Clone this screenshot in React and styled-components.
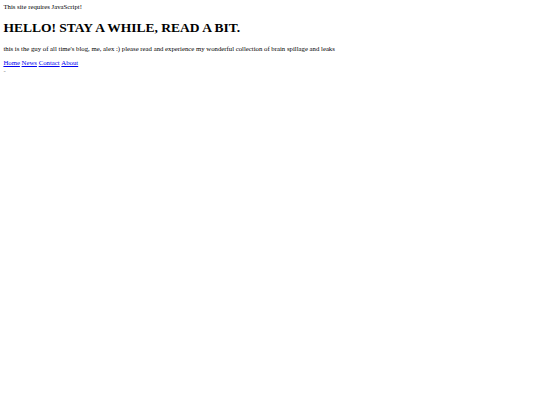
import styled, { createGlobalStyle } from 'styled-components'

const Global = createGlobalStyle`
  html, body {
    margin: 0;
    background: #fff;
  }
  body {
    padding: 3.4px;
    font-family: "Liberation Serif", "Times New Roman", serif;
    font-size: 6.75px;
    color: #000;
  }
`

const Notice = styled.div`
  line-height: 7.8px;
`

const Title = styled.h1`
  font-size: 13.5px;
  font-weight: bold;
  margin: 9px 0;
  line-height: 15.5px;
`

const Intro = styled.p`
  margin: 9px 0 6.75px;
  line-height: 7.8px;
`

const Nav = styled.nav`
  display: flex;
  gap: 1.7px;
  line-height: 7.8px;
`

const NavLink = styled.a`
  color: #0000ee;
  text-decoration: underline;
`

const Dash = styled.div`
  font-size: 6.75px;
  color: #777;
  line-height: 7.8px;
`

function App() {
  const links = ['Home', 'News', 'Contact', 'About']

  return (
    <>
      <Global />
      <Notice>This site requires JavaScript!</Notice>
      <Title>HELLO! STAY A WHILE, READ A BIT.</Title>
      <Intro>
        this is the guy of all time's blog, me, alex :) please read and experience my wonderful collection of brain spillage and leaks
      </Intro>
      <Nav>
        {links.map((l) => (
          <NavLink key={l} href="#">{l}</NavLink>
        ))}
      </Nav>
      <Dash>-</Dash>
    </>
  )
}

export default App
